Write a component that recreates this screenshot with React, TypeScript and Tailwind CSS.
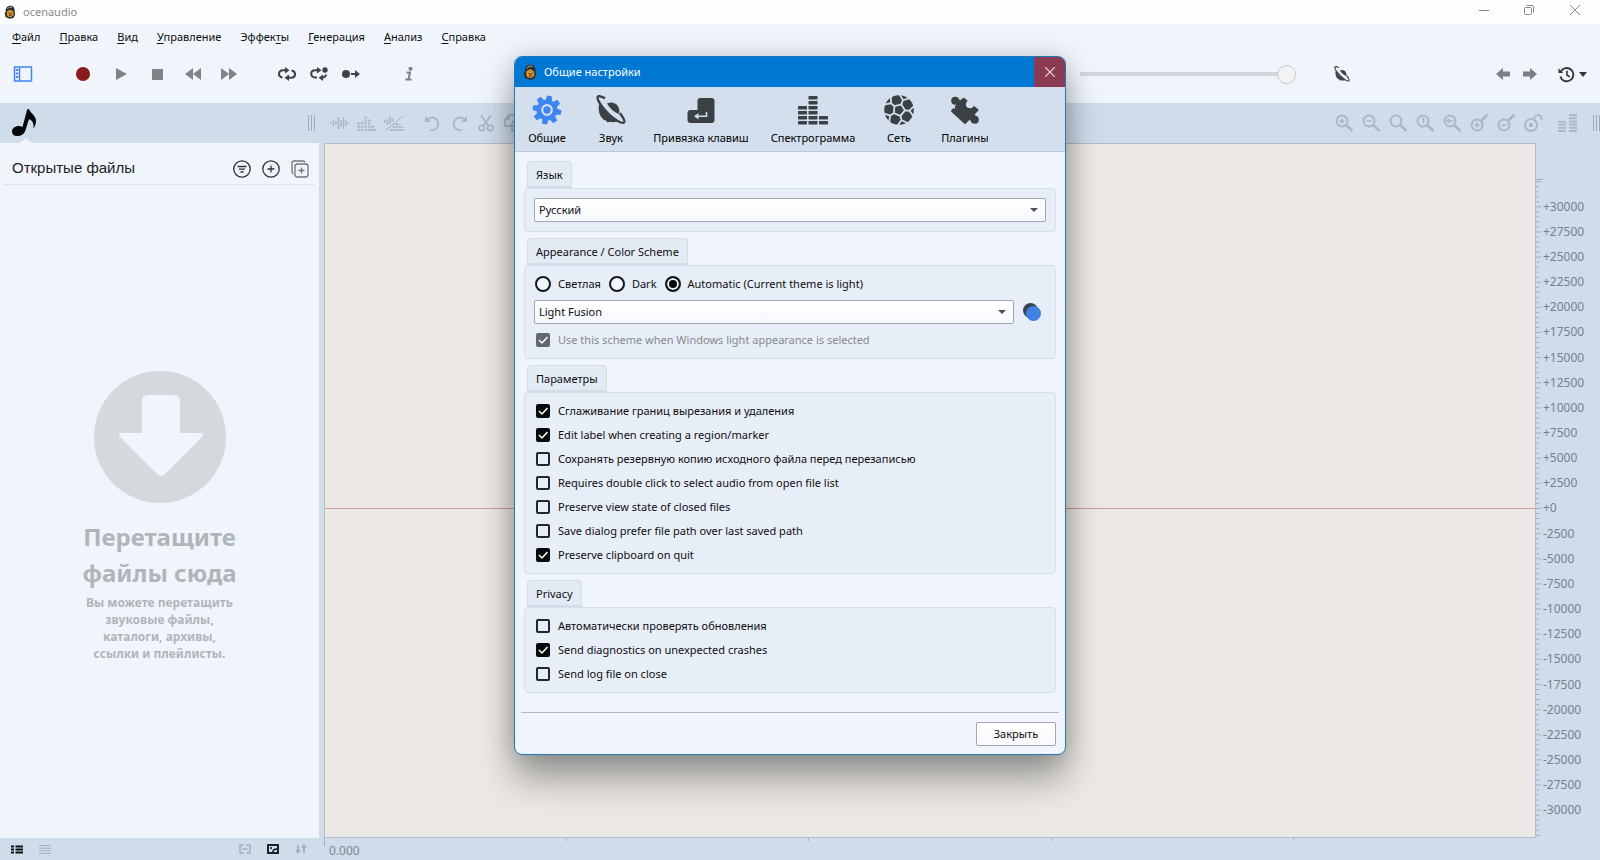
import { useState, type ReactNode } from 'react';

const menu = [
  ['', 'Ф', 'айл'],
  ['', 'П', 'равка'],
  ['', 'В', 'ид'],
  ['', 'У', 'правление'],
  ['Эффек', 'т', 'ы'],
  ['', 'Г', 'енерация'],
  ['', 'А', 'нализ'],
  ['', 'С', 'правка'],
];

const levels = Array.from({ length: 25 }, (_, i) => 30000 - i * 2500);
const ticks = Array.from({ length: 131 }, (_, i) => 32500 - i * 500);

const params = [
  { label: 'Сглаживание границ вырезания и удаления', on: true },
  { label: 'Edit label when creating a region/marker', on: true },
  { label: 'Сохранять резервную копию исходного файла перед перезаписью', on: false },
  { label: 'Requires double click to select audio from open file list', on: false },
  { label: 'Preserve view state of closed files', on: false },
  { label: 'Save dialog prefer file path over last saved path', on: false },
  { label: 'Preserve clipboard on quit', on: true },
];

const privacy = [
  { label: 'Автоматически проверять обновления', on: false },
  { label: 'Send diagnostics on unexpected crashes', on: true },
  { label: 'Send log file on close', on: false },
];

function AppLogo({ className }: { className: string }) {
  return (
    <svg viewBox="0 0 14 16" className={className}>
      <path d="M2 7C2 2 5 .5 8 .8s5 3 4.500 7L13 11l-2 4-4 .8L2 14 .8 10z" fill="#2b2a28" />
      <path d="M4 4.500C5 2 8 1.500 9.500 3" stroke="#cfc9bd" strokeWidth="1" fill="none" />
      <path d="M3.500 7l4-2 3.500 2.500.500 4-3 2.500-4-.5-1.500-3z" fill="#d2932f" />
      <path d="M5.500 9.500l2 .8 2-1M6 12h3" stroke="#4a3413" strokeWidth="1" fill="none" />
    </svg>
  );
}

function Planet({ className }: { className: string }) {
  return (
    <svg viewBox="0 0 30 30" className={className} fill="currentColor">
      <path d="M3.500 8.500C1.500 14 3 21 8 25l2 .5 1.500 2 2-.7c3 .8 5.500.5 8-.5C15 22.500 8 16 3.500 8.500z" />
      <path d="M11 8.500c5-2.500 10.500 0 12 5 .5 2 .3 4-.3 5.500C18 17 13.500 13 11 8.500z" />
      <path
        d="M9 3.300C5.500 1.200 2.500.6 1.800 1.800c-1.300 2.400 3.700 10 10.600 17 6.900 6.500 13.800 10.400 15.600 8.700 1.300-1.300-.6-4.900-4.200-9.600"
        fill="none"
        stroke="currentColor"
        strokeWidth="2.4"
      />
    </svg>
  );
}

function Gear() {
  return (
    <svg viewBox="0 0 30 30" className="size-[30px] text-[#3d85f0]" fill="currentColor">
      {[0, 45, 90, 135, 180, 225, 270, 315].map((a) => (
        <path key={a} d="M11.800 6L12.600.6h4.800l.8 5.400z" transform={`rotate(${a + 10} 15 15)`} />
      ))}
      <circle cx="15" cy="15" r="8.200" fill="none" stroke="currentColor" strokeWidth="4.600" />
      <circle cx="15" cy="15" r="3.700" />
    </svg>
  );
}

function EnterKey() {
  return (
    <svg viewBox="0 0 30 30" className="size-[30px]">
      <path
        d="M14.500 3h11a3 3 0 0 1 3 3v19a3 3 0 0 1-3 3h-21a3 3 0 0 1-3-3v-7a3 3 0 0 1 3-3h7V6a3 3 0 0 1 3-3z"
        fill="currentColor"
      />
      <path d="M20.500 17v4.300h-9" stroke="#d3dfec" strokeWidth="1.600" fill="none" />
      <path d="M8 21.300l4.500-3.300v6.600z" fill="#d3dfec" />
    </svg>
  );
}

function Bars({ columns, className }: { columns: number[]; className: string }) {
  return (
    <svg viewBox="0 0 30 30" className={className} fill="currentColor">
      {columns.map((n, c) =>
        Array.from({ length: n }, (_, r) => (
          <rect key={`${c}-${r}`} x={c * 10.500} y={26 - r * 5} width="9" height="3.400" rx=".6" />
        )),
      )}
    </svg>
  );
}

function Ball() {
  return (
    <svg viewBox="0 0 30 30" className="size-[30px]" fill="currentColor">
      <circle cx="15" cy="15" r="14.800" />
      <g stroke="#d3dfec" strokeWidth="1.800" fill="none" transform="rotate(22 15 15)">
        <path d="M15 9l5.700 4.100-2.200 6.800h-7l-2.200-6.800z" />
        {[0, 72, 144, 216, 288].map((a) => (
          <path key={a} d="M15 9V4.500M9.500 0L15 4.500 20.500 0" transform={`rotate(${a} 15 15)`} />
        ))}
      </g>
    </svg>
  );
}

function Puzzle() {
  return (
    <svg viewBox="0 0 30 30" className="size-[30px]" fill="currentColor">
      <path d="M13.500 3.500L27.500 15 15 28 2 16z" stroke="currentColor" strokeWidth="2" strokeLinejoin="round" />
      <circle cx="5.200" cy="5.800" r="4" />
      <path d="M5 8l4-4 4 6-4 4z" />
      <circle cx="24.800" cy="24.800" r="4" />
      <path d="M18 22l5-5 4 6-5 5z" />
      <circle cx="20" cy="9.200" r="4" fill="#d3dfec" />
      <path d="M20 5.500l5-4 3 4-4 5z" fill="#d3dfec" />
      <path d="M1 9.500l4 4M9.500 1l4 2" stroke="#d3dfec" strokeWidth="1.500" />
    </svg>
  );
}

const tabs = [
  { label: 'Общие', width: 'w-16', icon: <Gear /> },
  { label: 'Звук', width: 'w-16', icon: <Planet className="size-[30px]" /> },
  { label: 'Привязка клавиш', width: 'w-[116px]', icon: <EnterKey /> },
  { label: 'Спектрограмма', width: 'w-[108px]', icon: <Bars columns={[4, 6, 2]} className="size-[30px]" /> },
  { label: 'Сеть', width: 'w-16', icon: <Ball /> },
  { label: 'Плагины', width: 'w-[68px]', icon: <Puzzle /> },
];

function IconButton({ label, className = '', children }: { label: string; className?: string; children: ReactNode }) {
  return (
    <button type="button" aria-label={label} className={`flex shrink-0 items-center justify-center ${className}`}>
      {children}
    </button>
  );
}

function Magnifier({ children, flip = false }: { children?: ReactNode; flip?: boolean }) {
  return (
    <svg viewBox="0 0 20 20" className="size-5" fill="none" stroke="currentColor" strokeWidth="2">
      {flip ? (
        <>
          <circle cx="8" cy="12" r="5.500" />
          <path d="M12 8l6.500-6.500" strokeWidth="2.500" />
          <g transform="translate(0 4)">{children}</g>
        </>
      ) : (
        <>
          <circle cx="8" cy="8" r="5.500" />
          <path d="M12 12l6.500 6" strokeWidth="2.500" />
          {children}
        </>
      )}
    </svg>
  );
}

function Check({ label, defaultChecked, disabled = false }: { label: string; defaultChecked: boolean; disabled?: boolean }) {
  return (
    <label className={`flex h-6 items-center gap-2 ${disabled ? 'text-[#85898f]' : ''}`}>
      <span className="grid size-[14px]">
        <input
          type="checkbox"
          defaultChecked={defaultChecked}
          disabled={disabled}
          className="peer col-start-1 row-start-1 size-[14px] appearance-none rounded-xs border-2 border-[#23272d] checked:bg-[#08090b] checked:border-[#08090b] disabled:border-[#64686e] disabled:bg-[#64686e]"
        />
        <svg
          viewBox="0 0 14 14"
          className="pointer-events-none invisible col-start-1 row-start-1 size-[14px] peer-checked:visible"
        >
          <path d="M3 7l3 3 5.500-6" stroke="#fff" strokeWidth="1.500" fill="none" />
        </svg>
      </span>
      {label}
    </label>
  );
}

function Radio({ label, ...rest }: { label: string; defaultChecked?: boolean }) {
  return (
    <label className="flex items-center gap-[7px]">
      <input
        type="radio"
        name="scheme"
        {...rest}
        className="size-4 appearance-none rounded-full border-2 border-[#16191d] bg-[#f0f5fc] checked:bg-[#08090b] checked:shadow-[inset_0_0_0_2px_#f0f5fc]"
      />
      {label}
    </label>
  );
}

function Select({ label, options }: { label: string; options: string[] }) {
  return (
    <div className="grid flex-1 items-center">
      <select
        aria-label={label}
        className="col-start-1 row-start-1 h-6 w-full appearance-none rounded-xs border border-[#a3a8b0] bg-linear-to-b from-white to-[#f5f8fc] px-1 pt-px"
      >
        {options.map((o) => (
          <option key={o}>{o}</option>
        ))}
      </select>
      <svg viewBox="0 0 8 4" className="pointer-events-none col-start-1 row-start-1 mr-2 h-1 w-2 justify-self-end">
        <path d="M0 0h8L4 4z" fill="#4c5157" />
      </svg>
    </div>
  );
}

function Group({ title, className = '', children }: { title: string; className?: string; children: ReactNode }) {
  return (
    <section className="flex flex-col items-start">
      <h2 className="ml-[3px] flex h-[27px] items-center rounded-t border border-b-2 border-[#d3dce8] bg-[#e3eaf4] px-[8px] pt-[2px]">
        {title}
      </h2>
      <div className={`w-full rounded border border-[#d5deea] bg-[#e8eef7] px-[9px] ${className}`}>{children}</div>
    </section>
  );
}

function SettingsDialog({ onClose }: { onClose: () => void }) {
  return (
    <div
      role="dialog"
      aria-label="Общие настройки"
      className="absolute top-14 left-[514px] w-[552px] overflow-hidden rounded-lg border border-[#1f78b8] bg-[#f0f5fc] shadow-[0_24px_36px_rgba(0,0,0,0.34),0_0_24px_rgba(0,0,0,0.16)]"
    >
      <div className="flex h-[30px] items-center bg-[#0178d4] pl-2 text-white">
        <AppLogo className="h-4 w-[14px]" />
        <h1 className="ml-[7px] flex-1">Общие настройки</h1>
        <button
          type="button"
          aria-label="Закрыть окно"
          onClick={onClose}
          className="flex h-full w-[31px] items-center justify-center bg-[#8b3a52]"
        >
          <svg viewBox="0 0 10 10" className="size-[10px]" stroke="#f3e3e8" strokeWidth="1.100">
            <path d="M0 0l10 10M10 0L0 10" />
          </svg>
        </button>
      </div>
      <div role="tablist" className="flex h-[65px] border-b border-[#bccbdc] bg-[#d3dfec] text-[#3b4045]">
        {tabs.map((t, i) => (
          <button
            key={t.label}
            type="button"
            role="tab"
            aria-selected={i === 0}
            className={`flex flex-col items-center gap-[5px] pt-2 ${t.width}`}
          >
            {t.icon}
            <span className="leading-4 whitespace-nowrap text-black">{t.label}</span>
          </button>
        ))}
      </div>

      <div className="flex flex-col gap-[6px] px-[9px] pt-[9px]">
        <Group title="Язык" className="py-[9px]">
          <Select label="Язык" options={['Русский', 'English']} />
        </Group>
        <Group title="Appearance / Color Scheme" className="h-[94px] pt-[9px]">
          <div className="flex h-[18px] items-center gap-2 pl-px">
            <Radio label="Светлая" />
            <Radio label="Dark" />
            <Radio label="Automatic (Current theme is light)" defaultChecked />
          </div>
          <div className="mt-[7px] flex items-center">
            <Select label="Color Scheme" options={['Light Fusion', 'Dark Fusion']} />
            <IconButton label="Colors" className="w-8 pl-1">
              <svg viewBox="0 0 20 20" className="size-5">
                <circle cx="8.500" cy="8.500" r="7.500" fill="#3b4350" />
                <circle cx="11.500" cy="11.500" r="7.500" fill="#3f80e2" />
              </svg>
            </IconButton>
          </div>
          <div className="mt-1 pl-[2px]">
            <Check label="Use this scheme when Windows light appearance is selected" defaultChecked disabled />
          </div>
        </Group>
        <Group title="Параметры" className="h-[182px] pt-[6px] pl-[11px]">
          {params.map((p) => (
            <Check key={p.label} label={p.label} defaultChecked={p.on} />
          ))}
        </Group>
        <Group title="Privacy" className="h-[86px] pt-[6px] pl-[11px]">
          {privacy.map((p) => (
            <Check key={p.label} label={p.label} defaultChecked={p.on} />
          ))}
        </Group>
      </div>

      <div className="mx-[6px] mt-[19px] flex justify-end border-t border-[#b4bac4] px-[3px] pt-[9px] pb-2">
        <button
          type="button"
          onClick={onClose}
          className="h-6 w-20 rounded-xs border border-[#a3a8b0] bg-linear-to-b from-white to-[#f7f9fc]"
        >
          Закрыть
        </button>
      </div>
    </div>
  );
}

function TitleBar() {
  return (
    <header className="flex h-6 items-center bg-[#fefefe] pl-1">
      <AppLogo className="h-4 w-3" />
      <span className="ml-[7px] flex-1 text-[#8b8b8b]">ocenaudio</span>
      <div className="flex h-full text-[#8a8a8a]">
        <IconButton label="Свернуть" className="w-[45px] pb-1">
          <svg viewBox="0 0 10 10" className="size-[10px]" stroke="currentColor">
            <path d="M0 5.500h10" />
          </svg>
        </IconButton>
        <IconButton label="Развернуть" className="w-[45px] pb-1">
          <svg viewBox="0 0 10 10" className="size-[10px]" stroke="currentColor" fill="none">
            <rect x=".5" y="2.500" width="7" height="7" rx="1" />
            <path d="M2.500 .5H8a1.500 1.500 0 0 1 1.500 1.500v5.500" />
          </svg>
        </IconButton>
        <IconButton label="Закрыть" className="mr-px w-[48px] pb-1">
          <svg viewBox="0 0 10 10" className="size-[10px]" stroke="currentColor">
            <path d="M0 0l10 10M10 0L0 10" />
          </svg>
        </IconButton>
      </div>
    </header>
  );
}

function Transport() {
  return (
    <div className="flex h-[53px] items-center pb-[5px] text-[#3f4347]">
      <IconButton label="Боковая панель" className="ml-[13px] w-5">
        <svg viewBox="0 0 20 16" className="h-4 w-5" fill="none" stroke="#4385ec" strokeWidth="1.500">
          <rect x="1.500" y="1" width="17" height="14" />
          <path d="M6.500 1v14" />
          <path d="M4 3v10" strokeDasharray="2 1.500" strokeWidth="2.500" />
        </svg>
      </IconButton>
      <IconButton label="Запись" className="ml-[42px] w-4">
        <svg viewBox="0 0 14 14" className="size-[14px]">
          <circle cx="7" cy="7" r="7" fill="#8a1a1c" />
        </svg>
      </IconButton>
      <div className="ml-[20px] flex items-center gap-[18px] text-[#7f8386]">
        <IconButton label="Воспроизвести" className="w-5">
          <svg viewBox="0 0 11 12" className="h-3 w-[11px]" fill="currentColor">
            <path d="M0 0l11 6-11 6z" />
          </svg>
        </IconButton>
        <IconButton label="Стоп" className="w-[17px]">
          <svg viewBox="0 0 12 12" className="size-[11px]" fill="currentColor">
            <path d="M0 0h12v12H0z" />
          </svg>
        </IconButton>
        <IconButton label="Назад" className="w-[18px]">
          <svg viewBox="0 0 16 12" className="h-3 w-4" fill="currentColor">
            <path d="M8 0v12L0 6zM16 0v12L8 6z" />
          </svg>
        </IconButton>
        <IconButton label="Вперёд" className="w-[18px]">
          <svg viewBox="0 0 16 12" className="h-3 w-4" fill="currentColor">
            <path d="M0 0l8 6-8 6zM8 0l8 6-8 6z" />
          </svg>
        </IconButton>
      </div>
      <div className="ml-[40px] flex items-center gap-[14px]">
        <IconButton label="Петля">
          <svg viewBox="0 0 18 14" className="h-[14px] w-[18px]" fill="none" stroke="currentColor" strokeWidth="2">
            <path d="M4.500 10.500C-.5 9.500 0 3.500 5 3.300h3M13.500 3.500c5 1 4.500 7 0 7.200h-4" />
            <path d="M7 0l4.500 3.300L7 6.600zM11 7.400v6.600l-4.500-3.300z" fill="currentColor" stroke="none" />
          </svg>
        </IconButton>
        <IconButton label="Пропуск">
          <svg viewBox="0 0 18 14" className="h-[14px] w-[18px]" fill="none" stroke="currentColor" strokeWidth="2">
            <path d="M7 10.500H5C0 10 0 3.500 5 3.300h4M16 7.500c0 2-1.500 3-4.500 3.200" />
            <path d="M7 0l4.500 3.300L7 6.600zM13 7.400v6.600l-4.500-3.300z" fill="currentColor" stroke="none" />
            <circle cx="15" cy="3" r="2.700" fill="currentColor" stroke="none" />
          </svg>
        </IconButton>
        <IconButton label="К маркеру">
          <svg viewBox="0 0 18 12" className="h-3 w-[18px]" fill="currentColor">
            <circle cx="4" cy="6" r="4" />
            <path d="M9 5h4V2l5 4-5 4V7H9z" />
          </svg>
        </IconButton>
      </div>
      <IconButton label="Информация" className="ml-[41px] w-4">
        <svg viewBox="0 0 8 14" className="h-[14px] w-2" fill="none" stroke="#7b7f83" strokeWidth="2">
          <path d="M1.500 5.500h3.500L3.500 12.500h3M.500 12.500H5" />
          <circle cx="5.500" cy="1.800" r="1" />
        </svg>
      </IconButton>
      <input
        type="range"
        aria-label="Громкость"
        defaultValue={100}
        className="mr-[38px] ml-auto h-5 w-[216px] appearance-none bg-[linear-gradient(#d3d6da,#d3d6da)] bg-[length:100%_4px] bg-center bg-no-repeat [&::-webkit-slider-thumb]:size-[19px] [&::-webkit-slider-thumb]:appearance-none [&::-webkit-slider-thumb]:rounded-full [&::-webkit-slider-thumb]:border [&::-webkit-slider-thumb]:border-[#c9cccf] [&::-webkit-slider-thumb]:bg-[#f1f3f5]"
      />
      <IconButton label="Эффекты" className="mr-[146px]">
        <Planet className="size-4" />
      </IconButton>
      <div className="mr-[13px] flex items-center gap-[13px] text-[#7a7f84]">
        <IconButton label="Предыдущий">
          <svg viewBox="0 0 14 12" className="h-3 w-[14px]" fill="currentColor">
            <path d="M7 0v3.500h7v5H7V12L0 6z" />
          </svg>
        </IconButton>
        <IconButton label="Следующий">
          <svg viewBox="0 0 14 12" className="h-3 w-[14px]" fill="currentColor">
            <path d="M7 0v3.500H0v5h7V12l7-6z" />
          </svg>
        </IconButton>
        <IconButton label="История" className="ml-2 gap-1 text-[#33373b]">
          <svg viewBox="0 0 18 18" className="size-[17px]" fill="none" stroke="currentColor" strokeWidth="2">
            <path d="M3 6a7 7 0 1 1-.5 5" />
            <path d="M9.500 5v4.500l3 2" strokeWidth="1.700" />
            <path d="M.500 2.500v5h5z" fill="currentColor" stroke="none" />
          </svg>
          <svg viewBox="0 0 8 5" className="h-[5px] w-2" fill="currentColor">
            <path d="M0 0h8L4 5z" />
          </svg>
        </IconButton>
      </div>
    </div>
  );
}

function Grip() {
  return <span className="h-4 w-[7px] shrink-0 border-x border-[#9daab8] bg-[linear-gradient(#9daab8,#9daab8)] bg-[length:1px_100%] bg-center bg-no-repeat" />;
}

function EditStrip() {
  return (
    <div className="flex h-10 items-center bg-[#cfdcea] text-[#aab7c6]">
      <div className="flex w-[308px] flex-col self-stretch pl-3">
        <button type="button" aria-label="Открытые файлы" className="mt-[5px] w-6">
          <svg viewBox="0 0 24 28" className="h-7 w-6" fill="#050608">
            <path d="M10.500 19L15 2c.300-1.300 2-1.300 2.500 0 .8 3 6.500 5.500 6.500 11 0 3-1 5-2.500 7.500.6-5-1-8-4.500-9.500L13.500 22c-1 4-4.500 6-8.500 6-3 0-5-1.500-5-4.500C0 19.500 5.500 16.500 10.500 19z" />
          </svg>
        </button>
        <svg viewBox="0 0 12 5" className="mt-auto ml-2 h-[5px] w-3" fill="#f0f5fc">
          <path d="M0 5l6-5 6 5z" />
        </svg>
      </div>
      <Grip />
      <div className="ml-[15px] flex items-center gap-2">
        <IconButton label="Волна">
          <svg viewBox="0 0 19 14" className="h-[14px] w-[19px]" stroke="currentColor" strokeWidth="1.500">
            <path d="M1 6v2M3.500 4v6M6 5v4M8.500 1v12M11 4v7M13.500 1v12M16 4v6M18.500 6v2" />
          </svg>
        </IconButton>
        <IconButton label="Спектр">
          <svg viewBox="0 0 19 16" className="h-4 w-[19px]" stroke="currentColor" strokeWidth="2.500" strokeDasharray="2 1.200">
            <path d="M1.500 16V7M5 16V6M8.700 16V0M12.300 16V4M15.500 16v-6M18 16v-3" />
          </svg>
        </IconButton>
        <IconButton label="Волна и спектр">
          <svg viewBox="0 0 20 16" className="h-4 w-5" stroke="currentColor" strokeWidth="1.500">
            <path d="M1 5v3M3.500 4v6M6 1v8M8.500 3v4" />
            <path d="M2 15L19 1" strokeWidth="1" />
            <path d="M7 16v-3M10 16V9M13 16V7M16 16v-7M19 16v-4" strokeDasharray="2 1" strokeWidth="2.200" />
          </svg>
        </IconButton>
      </div>
      <div className="ml-5 flex items-center gap-[10px]">
        <IconButton label="Отменить">
          <svg viewBox="0 0 17 17" className="size-[17px]" fill="none" stroke="currentColor" strokeWidth="2">
            <path d="M3 5a6.300 6.300 0 1 1 3.500 10" />
            <path d="M1 1v6h6z" fill="currentColor" stroke="none" />
          </svg>
        </IconButton>
        <IconButton label="Повторить">
          <svg viewBox="0 0 17 17" className="size-[17px]" fill="none" stroke="currentColor" strokeWidth="2">
            <path d="M14 5a6.300 6.300 0 1 0-3.500 10" />
            <path d="M16 1v6h-6z" fill="currentColor" stroke="none" />
          </svg>
        </IconButton>
        <IconButton label="Вырезать">
          <svg viewBox="0 0 16 18" className="h-[18px] w-4" fill="none" stroke="currentColor" strokeWidth="1.800">
            <circle cx="3.700" cy="14" r="2.700" />
            <circle cx="12.300" cy="14" r="2.700" />
            <path d="M3 1l7.500 11M13 1L5.500 12" />
          </svg>
        </IconButton>
        <IconButton label="Копировать">
          <svg viewBox="0 0 18 18" className="size-[18px]" fill="none" stroke="currentColor" strokeWidth="1.800">
            <path d="M5 1h6v11H1V5zM5 1v4H1" />
            <path d="M11 6h6v11H8V9z" />
          </svg>
        </IconButton>
      </div>
      <div className="ml-auto flex items-center gap-[7px]">
        <IconButton label="Увеличить">
          <Magnifier>
            <path d="M5.500 8h5M8 5.500v5" strokeWidth="1.500" />
          </Magnifier>
        </IconButton>
        <IconButton label="Уменьшить">
          <Magnifier>
            <path d="M5.500 8h5" strokeWidth="1.500" />
          </Magnifier>
        </IconButton>
        <IconButton label="Показать всё">
          <Magnifier />
        </IconButton>
        <IconButton label="Масштаб 1:1">
          <Magnifier>
            <path d="M7 6l1.500-.5v5" strokeWidth="1.500" />
          </Magnifier>
        </IconButton>
        <IconButton label="Масштаб выделения">
          <Magnifier>
            <path d="M5 8h6M7 6L5 8l2 2" strokeWidth="1.500" />
          </Magnifier>
        </IconButton>
        <IconButton label="Увеличить по вертикали">
          <Magnifier flip>
            <path d="M5.500 8h5M8 5.500v5" strokeWidth="1.500" />
          </Magnifier>
        </IconButton>
        <IconButton label="Уменьшить по вертикали">
          <Magnifier flip>
            <path d="M5.500 8h5" strokeWidth="1.500" />
          </Magnifier>
        </IconButton>
        <IconButton label="Сбросить по вертикали">
          <svg viewBox="0 0 20 20" className="size-5" fill="none" stroke="currentColor" strokeWidth="2">
            <circle cx="8" cy="12" r="6" />
            <circle cx="8" cy="12" r="1.200" />
            <path d="M11 7c0-6 8-7 7.500 0" />
          </svg>
        </IconButton>
        <IconButton label="Уровни" className="mr-1 ml-1 w-7">
          <svg viewBox="0 0 20 18" className="h-[18px] w-5" stroke="currentColor" strokeWidth="8" strokeDasharray="2 1.200">
            <path d="M4 18V7M15 18V0" />
          </svg>
        </IconButton>
        <Grip />
      </div>
    </div>
  );
}

function FilePanel() {
  return (
    <aside className="flex w-[319px] shrink-0 flex-col bg-[#f0f5fc]">
      <div className="mx-1 flex h-[42px] items-center border-b border-[#dde4ee] pt-[10px] pr-[6px] pl-2">
        <h2 className="flex-1 font-['Liberation_Sans',sans-serif] text-[15px] text-[#1d2228]">Открытые файлы</h2>
        <div className="flex gap-[11px] text-[#2e3338]">
          <IconButton label="Фильтр">
            <svg viewBox="0 0 18 18" className="size-[18px]" fill="none" stroke="currentColor" strokeWidth="1.300">
              <circle cx="9" cy="9" r="8.200" />
              <path d="M4.500 6.500h9M6 9.200h6M7.500 12h3" />
            </svg>
          </IconButton>
          <IconButton label="Добавить">
            <svg viewBox="0 0 18 18" className="size-[18px]" fill="none" stroke="currentColor" strokeWidth="1.300">
              <circle cx="9" cy="9" r="8.200" />
              <path d="M5.500 9h7M9 5.500v7" />
            </svg>
          </IconButton>
          <IconButton label="Добавить несколько" className="text-[#6f757b]">
            <svg viewBox="0 0 18 18" className="size-[18px]" fill="none" stroke="currentColor" strokeWidth="1.300">
              <rect x="4" y="4" width="13" height="13" rx="2.500" />
              <path d="M2.500 14A2.500 2.500 0 0 1 1 12V3a2 2 0 0 1 2-2h9a2.500 2.500 0 0 1 2 1.500M7.500 10.500h6M10.500 7.500v6" />
            </svg>
          </IconButton>
        </div>
      </div>
      <div className="flex flex-1 flex-col items-center justify-center pt-[10px] text-center font-bold text-[#b0b5ba]">
        <svg viewBox="0 0 132 132" className="size-[132px]">
          <circle cx="66" cy="66" r="66" fill="#d4d9de" />
          <path
            d="M54 24h26q6 0 6 6v32h20q5 0 2 4l-37 37q-4 4-8 0L26 66q-3-4 2-4h20V30q0-6 6-6z"
            fill="#f0f5fc"
          />
        </svg>
        <p className="mt-4 w-[200px] text-2xl leading-9">Перетащите файлы сюда</p>
        <p className="mt-[3px] w-[160px] text-xs leading-[17px]">
          Вы можете перетащить звуковые файлы, каталоги, архивы, ссылки и плейлисты.
        </p>
      </div>
    </aside>
  );
}

function Waveform() {
  return (
    <main className="flex flex-1 flex-col justify-center border border-[#b3bdcb] bg-[#ebe8e5]">
      <div className="mt-9 h-px bg-[#cf9a9a]" />
    </main>
  );
}

function LevelRuler() {
  return (
    <div className="flex w-16 shrink-0 pt-9 text-xs text-[#76818d]">
      <svg className="h-full w-[7px]" stroke="#a3b0bf">
        {ticks.map((v) => (
          <line key={v} x1="0" x2={v % 2500 === 0 ? 5 : 3} y1={`${50 - v / 655.36}%`} y2={`${50 - v / 655.36}%`} />
        ))}
        <path d="M0 .5h7" />
      </svg>
      <div className="flex flex-1 flex-col py-[15px]">
        {levels.map((v) => (
          <span key={v} className="flex flex-1 items-center leading-4">
            {v < 0 ? v : `+${v}`}
          </span>
        ))}
      </div>
    </div>
  );
}

function StatusBar() {
  return (
    <footer className="flex h-[22px]">
      <div className="flex w-[324px] shrink-0 items-center gap-4 pl-[11px] text-[#a3b0bf]">
        <IconButton label="Подробный список" className="text-[#0c0e11]">
          <svg viewBox="0 0 12 9" className="h-[9px] w-3" stroke="currentColor" strokeWidth="1.800">
            <path d="M0 1.500h3M4.500 1.500H12M0 4.500h3M4.500 4.500H12M0 7.500h3M4.500 7.500H12" />
          </svg>
        </IconButton>
        <IconButton label="Список">
          <svg viewBox="0 0 12 9" className="h-[9px] w-3" stroke="currentColor">
            <path d="M0 .5h12M0 3.200h12M0 5.800h12M0 8.500h12" />
          </svg>
        </IconButton>
        <IconButton label="Связать" className="ml-auto">
          <svg viewBox="0 0 12 10" className="h-[10px] w-3" fill="none" stroke="currentColor" strokeWidth="1.500">
            <path d="M4.500 1H1v8h3.500M7.500 1H11v8H7.500M3.500 5h5" />
          </svg>
        </IconButton>
        <IconButton label="Обложка" className="text-[#0c0e11]">
          <svg viewBox="0 0 12 10" className="h-[10px] w-3" fill="none" stroke="currentColor" strokeWidth="1.800">
            <rect x="1" y="1" width="10" height="8" />
            <path d="M3 4h2M6 8c0-3 2-3 4-3" strokeWidth="1.500" />
          </svg>
        </IconButton>
        <IconButton label="Сортировка" className="mr-[17px]">
          <svg viewBox="0 0 12 10" className="h-[10px] w-3" fill="currentColor">
            <path d="M2 1h2v5h2L3 10 0 6h2zM8 9h2V4h2L9 0 6 4h2z" />
          </svg>
        </IconButton>
      </div>
      <div className="mr-[65px] flex flex-1 items-start text-xs text-[#7d8894]">
        {[0, 1, 2, 3, 4].map((n) => (
          <div key={n} className="flex flex-1 items-start">
            <i className={`w-px bg-[#a3b0bf] ${n === 0 ? 'h-2' : 'h-[3px]'}`} />
            {n === 0 && <span className="mt-[5px] ml-1 leading-4">0.000</span>}
          </div>
        ))}
      </div>
    </footer>
  );
}

export default function App() {
  const [open, setOpen] = useState(true);

  return (
    <div className="relative flex min-h-screen flex-col overflow-hidden bg-[#cfdcea] font-['Noto_Sans',sans-serif] text-[11px] text-[#0c0e11]">
      <TitleBar />
      <div className="bg-[#f0f5fc]">
        <nav className="flex h-[26px] items-center gap-[19px] px-3">
          {menu.map(([before, key, after]) => (
            <button key={before + key + after} type="button">
              {before}
              <u className="underline-offset-2">{key}</u>
              {after}
            </button>
          ))}
        </nav>
        <Transport />
      </div>
      <EditStrip />
      <div className="flex flex-1">
        <FilePanel />
        <div className="w-[5px]" />
        <Waveform />
        <LevelRuler />
      </div>
      <StatusBar />
      {open && <SettingsDialog onClose={() => setOpen(false)} />}
    </div>
  );
}
